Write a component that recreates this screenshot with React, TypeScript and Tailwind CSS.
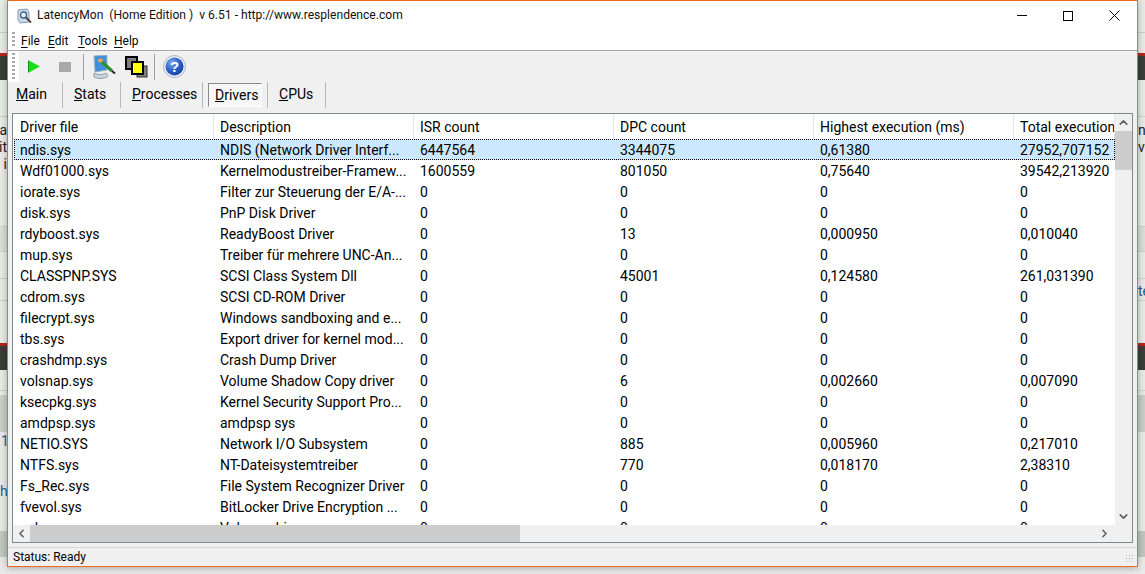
import { ChevronLeft, ChevronRight, ChevronUp, ChevronDown } from "lucide-react";

const columns = [
  { label: "Driver file", width: "w-[200px]" },
  { label: "Description", width: "w-[200px]" },
  { label: "ISR count", width: "w-[200px]" },
  { label: "DPC count", width: "w-[200px]" },
  { label: "Highest execution (ms)", width: "w-[200px]" },
  { label: "Total execution", width: "w-[101px]" },
];

const rows = [
  ["ndis.sys", "NDIS (Network Driver Interf...", "6447564", "3344075", "0,61380", "27952,707152"],
  ["Wdf01000.sys", "Kernelmodustreiber-Framew...", "1600559", "801050", "0,75640", "39542,213920"],
  ["iorate.sys", "Filter zur Steuerung der E/A-...", "0", "0", "0", "0"],
  ["disk.sys", "PnP Disk Driver", "0", "0", "0", "0"],
  ["rdyboost.sys", "ReadyBoost Driver", "0", "13", "0,000950", "0,010040"],
  ["mup.sys", "Treiber für mehrere UNC-An...", "0", "0", "0", "0"],
  ["CLASSPNP.SYS", "SCSI Class System Dll", "0", "45001", "0,124580", "261,031390"],
  ["cdrom.sys", "SCSI CD-ROM Driver", "0", "0", "0", "0"],
  ["filecrypt.sys", "Windows sandboxing and e...", "0", "0", "0", "0"],
  ["tbs.sys", "Export driver for kernel mod...", "0", "0", "0", "0"],
  ["crashdmp.sys", "Crash Dump Driver", "0", "0", "0", "0"],
  ["volsnap.sys", "Volume Shadow Copy driver", "0", "6", "0,002660", "0,007090"],
  ["ksecpkg.sys", "Kernel Security Support Pro...", "0", "0", "0", "0"],
  ["amdpsp.sys", "amdpsp sys", "0", "0", "0", "0"],
  ["NETIO.SYS", "Network I/O Subsystem", "0", "885", "0,005960", "0,217010"],
  ["NTFS.sys", "NT-Dateisystemtreiber", "0", "770", "0,018170", "2,38310"],
  ["Fs_Rec.sys", "File System Recognizer Driver", "0", "0", "0", "0"],
  ["fvevol.sys", "BitLocker Drive Encryption ...", "0", "0", "0", "0"],
  ["volmgr.sys", "Volume driver", "0", "0", "0", "0"],
];

const tabs = [
  { key: "M", rest: "ain", cell: "w-[55px] pl-[8px]" },
  { key: "S", rest: "tats", cell: "w-[58px] pl-[11px]" },
  { key: "P", rest: "rocesses", cell: "w-[82px] pl-[11px]" },
  { key: "D", rest: "rivers", cell: "w-[65px] pl-[5px]", active: true },
  { key: "C", rest: "PUs", cell: "w-[58px] pl-[11px]" },
];

function AppIcon() {
  return (
    <svg width="16" height="16" viewBox="0 0 16 16">
      <path d="M1 2l9-1 2 3v10l-9 1-2-3z" fill="#c4d8ea" stroke="#8b9bae" />
      <circle cx="6.5" cy="7" r="3" fill="#eaf3fb" stroke="#3d5f86" strokeWidth="1.3" />
      <path d="M9 9.5l5 5" stroke="#50402f" strokeWidth="1.8" />
    </svg>
  );
}

function MonitorIcon() {
  return (
    <svg width="24" height="24" viewBox="0 0 24 24">
      <path d="M2 1l13-1v15l-12 2z" fill="#3f8fdc" stroke="#9db2c6" />
      <path d="M2 18c3 2 9 2 12 0l2 3c-3 3-11 3-14 1z" fill="#cdd6de" stroke="#8f9ba6" />
      <path d="M5 5l4-2 3 3-4 2z" fill="#eda44f" />
      <path d="M10 7l10 9" stroke="#2f8f2f" strokeWidth="3.2" />
      <path d="M20 16l3 2.5" stroke="#222" strokeWidth="2" />
    </svg>
  );
}

function WindowsIcon() {
  return (
    <svg width="23" height="22" viewBox="0 0 23 22">
      <defs>
        <pattern id="dither" width="2" height="2" patternUnits="userSpaceOnUse">
          <rect width="2" height="2" fill="#ffff00" />
          <rect width="1" height="1" fill="#ffffa8" />
        </pattern>
      </defs>
      <rect x="1" y="1" width="11" height="12" fill="#808080" stroke="#000" strokeWidth="2" />
      <rect x="12" y="10" width="10" height="11" fill="#808080" stroke="#333" strokeWidth="1" />
      <rect x="7" y="6" width="11" height="12" fill="url(#dither)" stroke="#000" strokeWidth="2" />
    </svg>
  );
}

function HelpIcon() {
  return (
    <svg width="23" height="23" viewBox="0 0 23 23">
      <defs>
        <radialGradient id="globe" cx="0.35" cy="0.3" r="0.8">
          <stop offset="0" stopColor="#7fa8ea" />
          <stop offset="0.55" stopColor="#2a5fc8" />
          <stop offset="1" stopColor="#173f94" />
        </radialGradient>
      </defs>
      <circle cx="11.5" cy="11.5" r="11" fill="#e8edf5" stroke="#a9b6c9" />
      <circle cx="11.5" cy="11.5" r="9" fill="url(#globe)" />
      <text x="11.5" y="17" textAnchor="middle" fontSize="15" fontWeight="700" fill="#fff" fontFamily="Liberation Sans, sans-serif">?</text>
    </svg>
  );
}

function Sep() {
  return <div className="w-px h-[26px] bg-[#a0a0a0]" />;
}

function Gripper({ height }: { height: string }) {
  return (
    <div className="w-[11px] h-full bg-white flex items-center justify-center shrink-0">
      <div className={`w-[3px] ${height} bg-[repeating-linear-gradient(to_bottom,#a8a8a8_0,#a8a8a8_2px,transparent_2px,transparent_4px)]`} />
    </div>
  );
}

export default function App() {
  return (
    <div className="relative w-[1145px] h-[574px] overflow-hidden bg-[#eaeaea] font-['Roboto',sans-serif] text-black">
      {/* page behind the window */}
      <div className="absolute left-0 top-[53px] w-full h-[3px] bg-[#b5271c]" />
      <div className="absolute left-0 top-[56px] w-full h-[24px] bg-[#3c3c3c]" />
      <div className="absolute left-0 top-[343px] w-full h-[3px] bg-[#b5271c]" />
      <div className="absolute left-0 top-[346px] w-full h-[24px] bg-[#3c3c3c]" />
      <div className="absolute left-0 top-[32px] w-full h-px bg-[#cfcfcf]" />
      <div className="absolute left-0 top-[116px] w-full h-px bg-[#cfcfcf]" />
      <div className="absolute left-0 top-[226px] w-full h-[26px] bg-[#dddddd] border-y border-[#cfcfcf]" />
      <div className="absolute left-0 top-[278px] w-full h-px bg-[#cfcfcf]" />
      <div className="absolute left-0 top-[300px] w-full h-px bg-[#cfcfcf]" />
      <div className="absolute left-0 top-[390px] w-full h-px bg-[#cfcfcf]" />
      <div className="absolute left-0 top-[395px] w-full h-[37px] bg-[#cccccc]" />
      <div className="absolute left-0 top-[531px] w-full h-[26px] bg-[#c4c4c4]" />

      <div className="absolute left-0 top-[122px] w-[7px] overflow-hidden flex flex-col items-end text-[14px] leading-[17px] text-[#222]">
        <span>a</span>
        <span>it</span>
        <span>i</span>
      </div>
      <span className="absolute left-[1px] top-[431px] text-[14px] text-[#1c5a8e]">1</span>
      <span className="absolute left-0 top-[481px] text-[14px] text-[#1c5a8e]">h</span>
      <div className="absolute left-[1138px] top-[122px] w-[7px] overflow-hidden flex flex-col text-[14px] leading-[17px] text-[#222]">
        <span>n</span>
        <span>vo</span>
      </div>
      <span className="absolute left-[1138px] top-[281px] text-[14px] text-[#1c5a8e]">te</span>

      {/* LatencyMon window */}
      <div className="absolute left-[7px] top-0 w-[1131px] h-[567px] border border-[#f26a1b] bg-[#f0f0f0] flex flex-col shadow-[0_1px_7px_rgba(0,0,0,0.3)]">
        <div className="h-[29px] bg-white flex items-center shrink-0">
          <div className="ml-[9px] mr-[4px] flex">
            <AppIcon />
          </div>
          <span className="text-[12.1px] text-[#111]">LatencyMon&nbsp; (Home Edition )&nbsp; v 6.51 - http://www.resplendence.com</span>
          <div className="ml-auto flex items-center h-full">
            <div className="w-[46px] flex justify-center"><div className="w-[10px] h-px bg-black" /></div>
            <div className="w-[46px] flex justify-center"><div className="w-[10px] h-[10px] border border-black" /></div>
            <div className="w-[46px] flex justify-center">
              <svg width="11" height="11" viewBox="0 0 11 11"><path d="M.5.5l10 10M10.5.5l-10 10" stroke="#000" fill="none" /></svg>
            </div>
          </div>
        </div>
        <div className="h-[21px] bg-white border-b border-[#a8a8a8] flex items-center shrink-0">
          <Gripper height="h-[16px]" />
          <div className="flex ml-[2px] pt-[2px] text-[12px]">
            <span className="w-[27px]"><span className="underline underline-offset-2">F</span>ile</span>
            <span className="w-[30px]"><span className="underline underline-offset-2">E</span>dit</span>
            <span className="w-[36px]"><span className="underline underline-offset-2">T</span>ools</span>
            <span><span className="underline underline-offset-2">H</span>elp</span>
          </div>
        </div>

        <div className="h-[31px] flex items-center shrink-0">
          <Gripper height="h-[27px]" />
          <div className="w-[9px]" />
          <svg width="12" height="13" viewBox="0 0 12 13"><path d="M1 .5l11 6-11 6z" fill="#18e018" /><path d="M.5 .5v12" stroke="#0a8f0a" /></svg>
          <div className="w-[19px]" />
          <div className="w-[12px] h-[10px] bg-[#a9a9a9]" />
          <div className="w-[12px]" />
          <Sep />
          <div className="w-[8px]" />
          <MonitorIcon />
          <div className="w-[9px]" />
          <WindowsIcon />
          <div className="w-[6px]" />
          <Sep />
          <div className="w-[8px]" />
          <HelpIcon />
        </div>

        <div className="h-[26px] flex items-center text-[14px] shrink-0">
          {tabs.map((t) => (
            <div key={t.key} className={`${t.cell} h-full flex items-center border-r border-[#b8b8b8] shrink-0`}>
              {t.active ? (
                <div className="w-[54px] h-[24px] pl-[6px] flex items-center border border-[#8a8a8a] border-r-white border-b-white bg-[#f7f7f7]">
                  <span><span className="underline">{t.key}</span>{t.rest}</span>
                </div>
              ) : (
                <span className="pb-[1px]"><span className="underline">{t.key}</span>{t.rest}</span>
              )}
            </div>
          ))}
        </div>

        <div className="h-[5px] shrink-0" />

        {/* driver list */}
        <div className="mx-[4px] h-[430px] w-[1121px] border border-[#828790] bg-white flex flex-col overflow-hidden shrink-0">
          <div className="flex flex-1 min-h-0">
            <div className="w-[1102px] pl-px flex flex-col overflow-hidden">
              <div className="h-[25px] flex shrink-0 text-[14px] items-center">
                {columns.map((c) => (
                  <div key={c.label} className={`${c.width} h-full shrink-0 border-r border-[#e5e5e5] pl-[6px] pt-[2px] flex items-center whitespace-nowrap overflow-hidden`}>{c.label}</div>
                ))}
              </div>
              {rows.map((r, i) => (
                <div key={r[0]} className={i === 0 ? "h-[21px] pt-[2px] flex shrink-0 items-center text-[14px] bg-[#cce8ff] outline-1 outline-dotted -outline-offset-1 outline-black" : "h-[21px] pt-[2px] flex shrink-0 items-center text-[14px]"}>
                  {r.map((v, j) => (
                    <div key={j} className={`${columns[j].width} shrink-0 pl-[6px] whitespace-nowrap overflow-hidden`}>{v}</div>
                  ))}
                </div>
              ))}
            </div>
            <div className="w-[17px] bg-[#f0f0f0] flex flex-col items-center shrink-0">
              <div className="h-[17px] flex items-center justify-center"><ChevronUp size={13} strokeWidth={3} className="text-[#606060]" /></div>
              <div className="w-full h-[39px] bg-[#cdcdcd]" />
              <div className="flex-1" />
              <div className="h-[17px] flex items-center justify-center"><ChevronDown size={13} strokeWidth={3} className="text-[#606060]" /></div>
            </div>
          </div>
          <div className="h-[17px] flex items-center bg-[#f0f0f0] shrink-0">
            <div className="w-[17px] flex justify-center"><ChevronLeft size={13} strokeWidth={3} className="text-[#606060]" /></div>
            <div className="w-[490px] h-full bg-[#cdcdcd]" />
            <div className="flex-1" />
            <div className="w-[17px] mr-[19px] flex justify-center"><ChevronRight size={13} strokeWidth={3} className="text-[#606060]" /></div>
          </div>
        </div>

        <div className="h-[4px] shrink-0" />
        <div className="flex-1 border-t border-[#d7d7d7] flex items-center pl-[5px] text-[12px] relative">
          <span>Status: Ready</span>
          <div className="absolute right-[2px] bottom-[2px] w-[10px] h-[10px] bg-[radial-gradient(#b0b0b0_1px,transparent_1px)] bg-[length:3px_3px]" />
        </div>
      </div>
    </div>
  );
}
